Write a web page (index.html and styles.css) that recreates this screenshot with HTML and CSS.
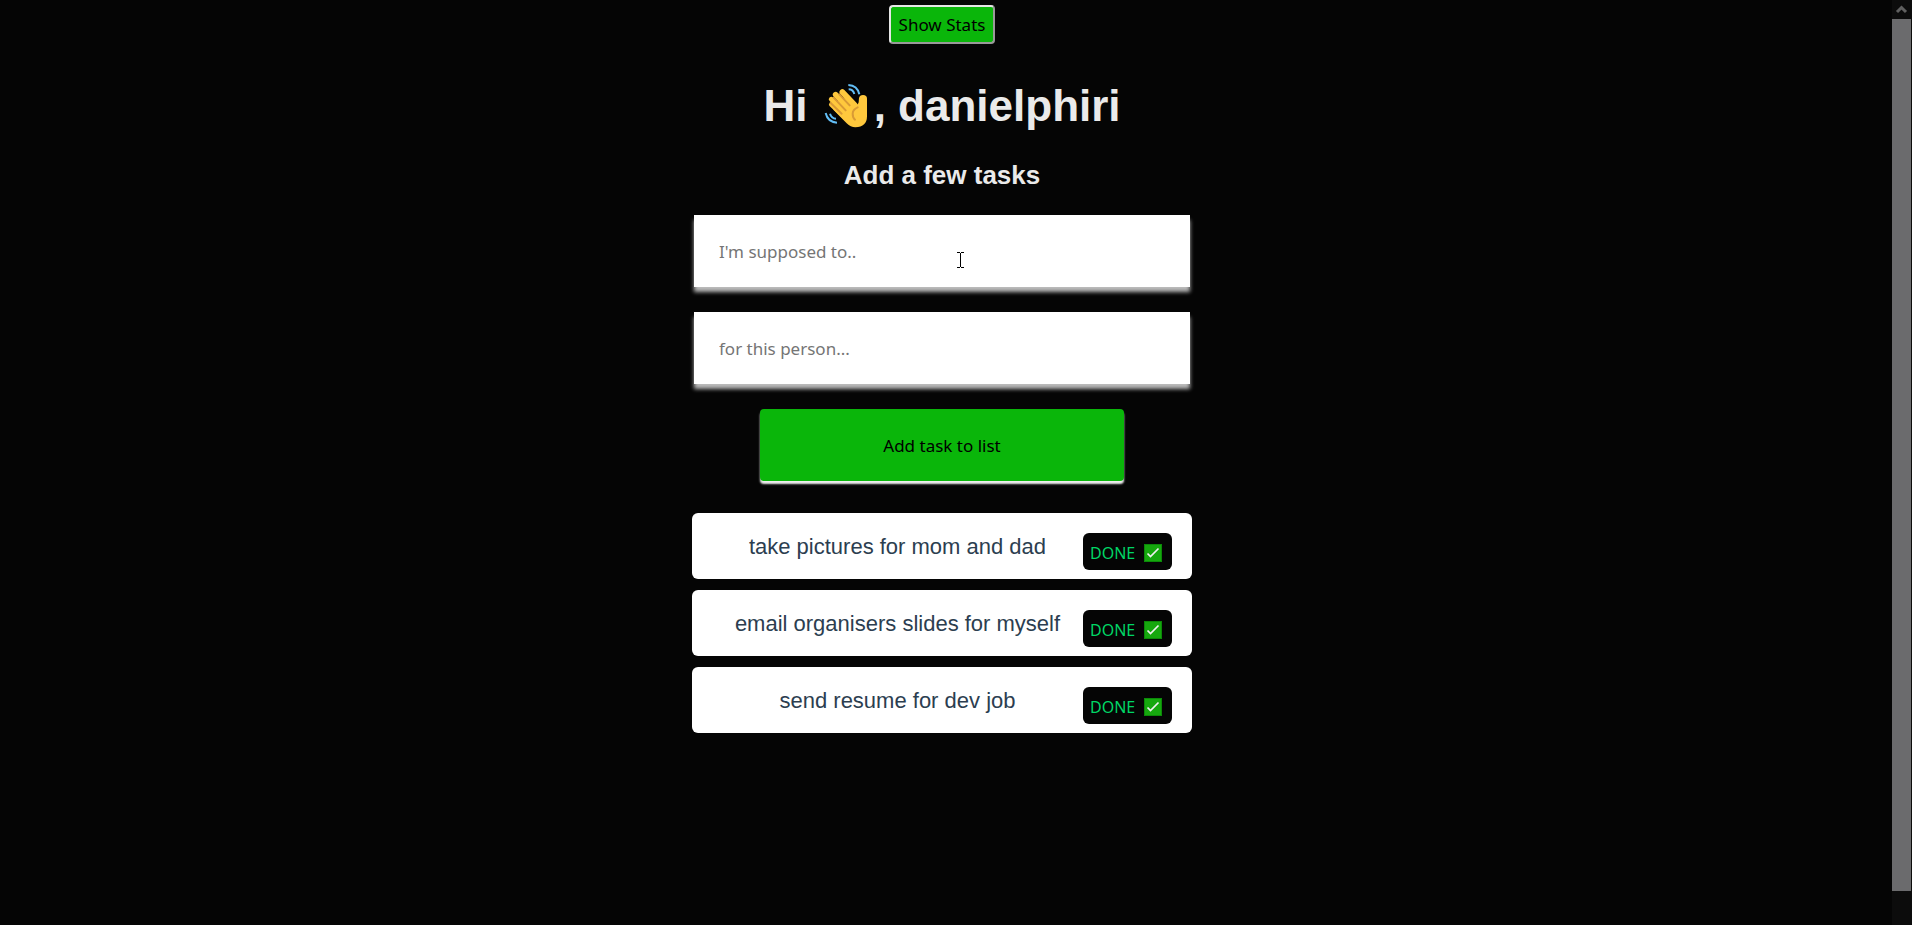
FILE: index.html
```html
<!DOCTYPE html>
<html lang="en">
<head>
<meta charset="utf-8">
<title>Tasks</title>
<link rel="stylesheet" href="styles.css">
</head>
<body>
<svg class="defs" aria-hidden="true">
  <symbol id="check" viewBox="0 0 18 18">
    <rect width="18" height="18" fill="#0b8a08"/>
    <rect x="1" y="1" width="16" height="16" fill="#16a80e"/>
    <path d="M3.5 9.5 6.5 12.500 14.500 4.500" fill="none" stroke="#f0f0f0" stroke-width="1.700"/>
  </symbol>
</svg>
<main class="page">
  <button class="stats" type="button">Show Stats</button>
  <h1 class="greeting">Hi <svg class="wave" viewBox="36 18 162 144" role="img" aria-label="waving hand">
    <g fill="none" stroke="#ffc83d" stroke-linecap="round">
      <path d="M103 51 140 90" stroke-width="17"/>
      <path d="M83 59 125 104" stroke-width="17"/>
      <path d="M70 73 115 117" stroke-width="15"/>
      <path d="M70 89 115 131" stroke-width="14"/>
    </g>
    <path d="M98 63 142 88Q150 92 152 82L153 69Q155 60 165 60Q177 60 177 71V124Q177 156 142 157Q128 157 116 145L76 104Z" fill="#ffc83d"/>
    <path d="M94 58 125 91M77 68 113 106M68 84 101 116M149 97Q134 104 134 116Q134 128 141 134" fill="none" stroke="#d99a35" stroke-width="6" stroke-linecap="round"/>
    <path d="M121 30Q148 31 154 58M122 43Q135 43 139 57M53 114Q59 141 87 143M66 116Q70 130 84 131" fill="none" stroke="#62bdf5" stroke-width="6"/>
  </svg>, danielphiri</h1>
  <h2 class="subtitle">Add a few tasks</h2>
  <form class="form">
    <div class="field">
      <input class="input" type="text" aria-label="Task" placeholder="I'm supposed to..">
      <svg class="cursor" viewBox="0 0 7 16" aria-hidden="true"><path d="M0 .5H3M4 .5H7M3.500 1V15M0 15.500H3M4 15.500H7" stroke="#000" fill="none"/></svg>
    </div>
    <input class="input" type="text" aria-label="Person" placeholder="for this person...">
    <button class="add" type="button">Add task to list</button>
  </form>
  <ul class="tasks">
    <li class="task"><span class="text">take pictures for mom and dad</span><button class="done" type="button">DONE <svg class="check"><use href="#check"/></svg></button></li>
    <li class="task"><span class="text">email organisers slides for myself</span><button class="done" type="button">DONE <svg class="check"><use href="#check"/></svg></button></li>
    <li class="task"><span class="text">send resume for dev job</span><button class="done" type="button">DONE <svg class="check"><use href="#check"/></svg></button></li>
  </ul>
</main>
<div class="scrollbar" aria-hidden="true">
  <svg class="arrow" viewBox="0 0 20 19"><path d="M5 12 9.500 7.500 14 12" fill="none" stroke="#606060" stroke-width="3"/></svg>
  <div class="thumb"></div>
</div>
</body>
</html>
```

FILE: styles.css
```css
* { box-sizing: border-box; }
body {
  margin: 0;
  min-height: 100vh;
  display: flex;
  background: #050505;
  color: #eaeaea;
  font-family: "Liberation Sans", Arial, sans-serif;
}
.defs { position: absolute; width: 0; height: 0; }
.page {
  flex: 1;
  display: flex;
  flex-direction: column;
  align-items: center;
  padding: 5px 8px 24px 0;
}
button, input { font-family: "Noto Sans", sans-serif; font-size: 17px; }
.stats {
  padding: 0 8px;
  line-height: 35px;
  background: #0ab60a;
  color: #000;
  border: 2px solid;
  border-color: #e6e6e6 #999 #999 #e6e6e6;
  border-radius: 4px;
}
.greeting { margin: 36px 0 0; font-size: 44px; line-height: 52px; white-space: nowrap; }
.wave { width: 54px; height: 48px; vertical-align: -8px; }
.subtitle { margin: 28px 0 25px; font-size: 26px; line-height: 30px; }
.form {
  width: 100%;
  max-width: 496px;
  display: flex;
  flex-direction: column;
  align-items: center;
  gap: 25px;
}
.field { position: relative; width: 100%; }
.input {
  display: block;
  width: 100%;
  height: 72px;
  padding: 0 25px;
  border: 0;
  border-radius: 0;
  background: #fff;
  box-shadow: 0 5px 4px #bbb;
}
.input::placeholder { color: #757575; opacity: 1; }
.cursor { position: absolute; left: 263px; top: 37px; width: 7px; height: 16px; }
.add {
  width: 364px;
  max-width: 100%;
  height: 72px;
  border: 0;
  border-radius: 4px;
  background: #0ab60a;
  color: #000;
  box-shadow: 0 3px 2px #eee;
}
.tasks {
  list-style: none;
  margin: 32px 0 0;
  padding: 0;
  width: 100%;
  max-width: 500px;
  display: flex;
  flex-direction: column;
  gap: 11px;
}
.task {
  display: flex;
  align-items: center;
  min-height: 66px;
  padding: 0 20px;
  border-radius: 6px;
  background: #fff;
  color: #2c3e50;
}
.text { flex: 1; margin-top: 2px; text-align: center; font-size: 22px; line-height: 26px; }
.done {
  display: flex;
  align-items: center;
  justify-content: space-between;
  width: 89px;
  height: 37px;
  margin-top: 11px;
  padding: 3px 10px 0 7px;
  border: 0;
  border-radius: 6px;
  background: #050505;
  color: #00d665;
  font-size: 16px;
}
.check { width: 18px; height: 18px; }
.scrollbar {
  width: 20px;
  height: 100vh;
  display: flex;
  flex-direction: column;
  padding: 0 1px 34px 0;
  background: #0c0c0c;
}
.arrow { width: 20px; height: 19px; }
.thumb { flex: 1; background: #6b6b6d; }
```
